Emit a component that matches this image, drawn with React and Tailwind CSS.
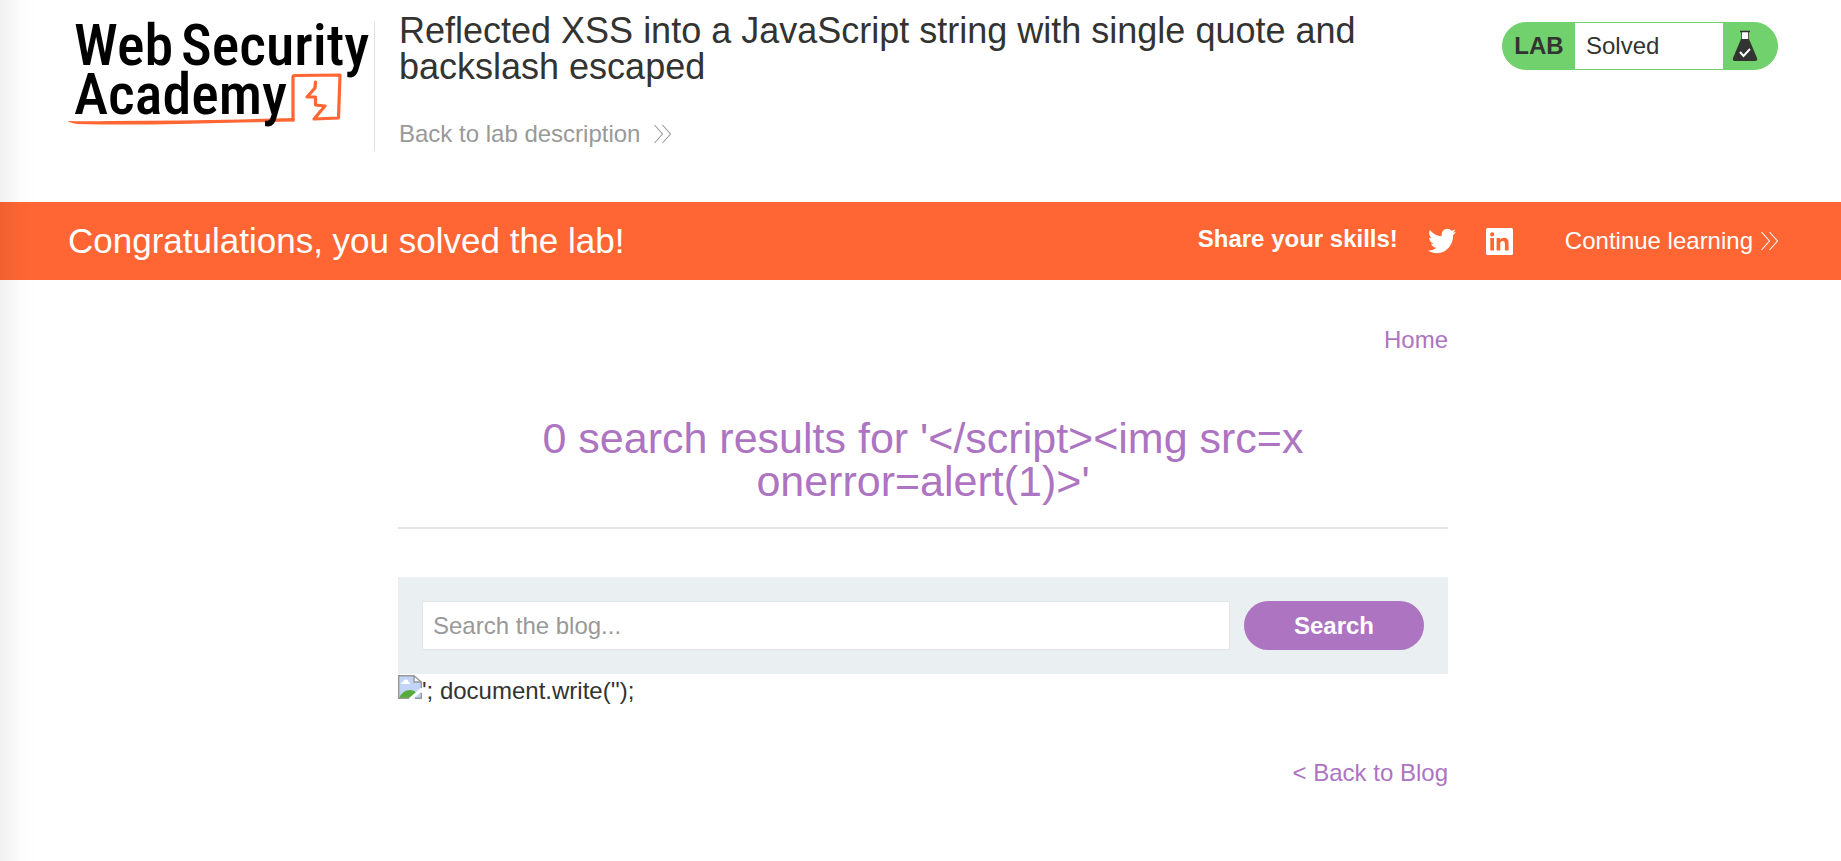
import React from "react";
import { FaTwitter } from "react-icons/fa";

function Chevrons({ className }) {
  return (
    <svg width="17" height="20" viewBox="0 0 17 20" fill="none" stroke="currentColor" strokeWidth="1.1" className={className} aria-hidden="true">
      <path d="M0.500 1 L8.500 10 L0.500 19 M8.500 1 L16.500 10 L8.500 19" />
    </svg>
  );
}

function Logo() {
  return (
    <svg width="300" height="110" viewBox="68 22 300 110" role="img" aria-label="Web Security Academy" className="block shrink-0 overflow-visible">
      <path
        d="M293 120 L293 77 Q293 75.500 295 75.500 L340 75 L338.500 118 L314 119 L325 106 L315.500 105 L315.500 97 L307 97 L315 88 L315.500 82"
        fill="none"
        stroke="#ff6633"
        strokeWidth="3.200"
        strokeLinejoin="round"
        strokeLinecap="round"
      />
      <path d="M68 121 Q85 121.500 110 121 L180 120.500 L240 119.500 L294.500 118 V121.500 L240 122.500 L180 124 Q120 125 78 124 Q70 123 68 121 Z" fill="#ff6633" />
      <g fill="#000" fontFamily="'Roboto Condensed', Roboto, sans-serif" fontWeight="500" fontSize="58">
        <text x="74" y="65">Web</text>
        <text x="181" y="65">Security</text>
        <text x="74" y="114">Academy</text>
      </g>
    </svg>
  );
}

function LinkedIn() {
  return (
    <svg width="27" height="27" viewBox="0 0 27 27" aria-hidden="true">
      <rect width="27" height="27" rx="1.500" fill="#fff" />
      <g fill="#ff6633">
        <circle cx="6.200" cy="6.400" r="2.100" />
        <path d="M4.300 10 H8 V22.500 H4.300 Z" />
        <path d="M10.600 10 H14.200 V11.700 Q15.400 9.700 18 9.700 Q22.600 9.700 22.600 15 V22.500 H18.900 V15.900 Q18.900 13 16.800 13 Q14.300 13 14.300 16 V22.500 H10.600 Z" />
      </g>
    </svg>
  );
}

function Flask() {
  return (
    <svg width="26" height="32" viewBox="0 0 26 32" aria-hidden="true">
      <path d="M9.500 1.500 H16.500 V10 H9.500 Z" fill="#fff" stroke="#333332" strokeWidth="0.800" />
      <path d="M8 1.500 H18" stroke="#333332" strokeWidth="1.500" />
      <path d="M9 9 H17 L25 28 Q26 31 23 31 H3 Q0 31 1 28 Z" fill="#333332" />
      <path d="M8 22 L11.500 26 L18 19" fill="none" stroke="#fff" strokeWidth="2" />
    </svg>
  );
}

function BrokenImage() {
  return (
    <svg width="24" height="24" viewBox="0 0 24 24" className="block" role="img" aria-label="Broken image">
      <path d="M0.700 0.700 H16 L23.300 7 V23.300 H0.700 Z" fill="#c3d5f7" />
      <path d="M3 9 Q3 7 5 7 Q6 4 8.500 4.500 Q10.500 4.500 10.500 7 Q12 7 12 9 Z" fill="#fff" />
      <path d="M1 23 Q5 15 12 15 Q16 15 19 18 L13 23 Z" fill="#55ac3a" />
      <path d="M16 0.700 V7 H23.300 Z" fill="#fff" />
      <path d="M24 12 V16 L15 24 H10 Z" fill="#fff" />
      <path d="M11 23.300 H0.700 V0.700 H16 L23.300 7 V13 M16 1 V7 H23 M23.300 18 V23.300 H17" fill="none" stroke="#979797" strokeWidth="1.400" />
    </svg>
  );
}

export default function App() {
  return (
    <div className="relative min-h-screen bg-white font-['Liberation_Sans',Arial,sans-serif] text-2xl leading-8 text-[#333332]">
      <header className="flex h-[202px] items-start pl-[68px] pr-[63px]">
        <a href="#academy" className="mt-[22px] h-[129px] shrink-0 border-r border-[#e0e0e0] pr-[6px]">
          <Logo />
        </a>
        <div className="ml-6 mt-[13px] flex-1">
          <h2 className="max-w-[1000px] text-[36px] leading-9">
            Reflected XSS into a JavaScript string with single quote and backslash escaped
          </h2>
          <a href="#description" className="mt-[33px] inline-flex items-center gap-[14px] text-[#999999]">
            Back to lab description
            <Chevrons />
          </a>
        </div>
        <div className="mt-[22px] flex h-12 w-[276px] shrink-0 overflow-hidden rounded-3xl border border-[#71d26d] bg-[#71d26d]">
          <span className="flex w-[72px] items-center justify-center font-bold">LAB</span>
          <span className="flex flex-1 items-center bg-white pl-[11px]">Solved</span>
          <span className="flex w-[54px] items-center pl-[9px]">
            <Flask />
          </span>
        </div>
      </header>

      <section className="flex h-[78px] items-center bg-[#ff6633] pl-[68px] pr-[63px] text-white">
        <h4 className="flex-1 text-[35px] leading-10">Congratulations, you solved the lab!</h4>
        <span className="mb-1 font-bold">Share your skills!</span>
        <a href="#twitter" aria-label="Share on Twitter" className="ml-[30px]">
          <FaTwitter preserveAspectRatio="none" className="h-[30px] w-7" />
        </a>
        <a href="#linkedin" aria-label="Share on LinkedIn" className="ml-[30px]">
          <LinkedIn />
        </a>
        <a href="#learn" className="ml-[52px] flex items-center gap-2">
          Continue learning
          <Chevrons />
        </a>
      </section>

      <main className="ml-[398px] mr-[393px] flex flex-col">
        <nav className="mt-11 self-end text-[#ad74c1]">
          <a href="#home">Home</a>
        </nav>
        <h1 className="mt-[61px] px-[120px] text-center text-[43px] leading-[43px] text-[#ad74c1]">
          {"0 search results for '</script><img src=x onerror=alert(1)>'"}
        </h1>
        <hr className="mt-6 border-t-2 border-[#e5e6e6]" />
        <form className="mt-12 flex gap-[14px] bg-[#eaeff2] p-6" onSubmit={(e) => e.preventDefault()}>
          <input
            type="text"
            aria-label="Search the blog"
            placeholder="Search the blog..."
            className="h-[49px] min-w-0 flex-1 border border-[#e0e4e7] bg-white px-[10px] outline-none placeholder:text-[#999999]"
          />
          <button type="submit" className="h-[49px] w-[180px] rounded-full bg-[#ad74c1] font-bold text-white">
            Search
          </button>
        </form>
        <p className="flex items-start pt-px">
          <BrokenImage />
          <span>{"'; document.write('');"}</span>
        </p>
        <a href="#blog" className="mt-[50px] self-end text-[#ad74c1]">
          {"< Back to Blog"}
        </a>
      </main>

      <div className="pointer-events-none absolute inset-y-0 left-0 w-10 bg-gradient-to-r from-black/6 via-black/1 to-transparent" />
    </div>
  );
}
